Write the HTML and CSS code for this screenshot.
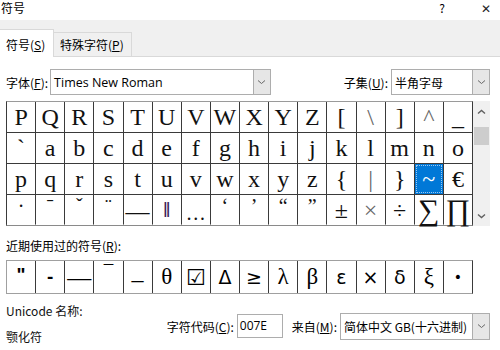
FILE: index.html
```html
<!DOCTYPE html>
<html lang="zh-CN">
<head>
    <meta charset="UTF-8">
    <title>符号</title>
    <link rel="stylesheet" href="styles.css">
</head>
<body>
    <div class="titlebar">
        <span class="title">符号</span>
        <span class="help">?</span>
        <span class="close">✕</span>
    </div>
    <div class="tabstrip">
        <div class="tab active">符号(<u>S</u>)</div>
        <div class="tab">特殊字符(<u>P</u>)</div>
    </div>
    <div class="panel">
        <div class="font-row">
            <span class="lbl">字体(<u>F</u>):</span>
            <div class="combo font-combo">
                <span class="combo-text">Times New Roman</span>
                <span class="combo-btn"><svg width="9" height="6" viewBox="0 0 9 6"><path d="M1 1.5 L4.5 4.5 L8 1.5" fill="none" stroke="#666" stroke-width="1"/></svg></span>
            </div>
            <span class="lbl subset-lbl">子集(<u>U</u>):</span>
            <div class="combo subset-combo">
                <span class="combo-text">半角字母</span>
                <span class="combo-btn"><svg width="9" height="6" viewBox="0 0 9 6"><path d="M1 1.5 L4.5 4.5 L8 1.5" fill="none" stroke="#666" stroke-width="1"/></svg></span>
            </div>
        </div>

        <div class="charmap">
            <div class="chars">
                <div class="cell">P</div><div class="cell">Q</div><div class="cell">R</div><div class="cell">S</div>
                <div class="cell">T</div><div class="cell">U</div><div class="cell">V</div><div class="cell">W</div>
                <div class="cell">X</div><div class="cell">Y</div><div class="cell">Z</div><div class="cell">[</div>
                <div class="cell thin">\</div><div class="cell">]</div><div class="cell thin">^</div><div class="cell">_</div>

                <div class="cell">`</div><div class="cell">a</div><div class="cell">b</div><div class="cell">c</div>
                <div class="cell">d</div><div class="cell">e</div><div class="cell">f</div><div class="cell">g</div>
                <div class="cell">h</div><div class="cell">i</div><div class="cell">j</div><div class="cell">k</div>
                <div class="cell">l</div><div class="cell">m</div><div class="cell">n</div><div class="cell">o</div>

                <div class="cell">p</div><div class="cell">q</div><div class="cell">r</div><div class="cell">s</div>
                <div class="cell">t</div><div class="cell">u</div><div class="cell">v</div><div class="cell">w</div>
                <div class="cell">x</div><div class="cell">y</div><div class="cell">z</div><div class="cell">{</div>
                <div class="cell thin">|</div><div class="cell">}</div><div class="cell selected">~</div><div class="cell">€</div>

                <div class="cell small">·</div><div class="cell small">ˉ</div><div class="cell small">ˇ</div><div class="cell small">¨</div>
                <div class="cell dash">—</div><div class="cell bars">‖</div><div class="cell ellipsis">…</div><div class="cell small">‘</div>
                <div class="cell small">’</div><div class="cell small">“</div><div class="cell small">”</div><div class="cell">±</div>
                <div class="cell thin">×</div><div class="cell">÷</div><div class="cell big">∑</div><div class="cell big">∏</div>
            </div>
            <div class="scrollbar">
                <svg class="arrow" width="9" height="6" viewBox="0 0 9 6"><path d="M1 4.5 L4.5 1.5 L8 4.5" fill="none" stroke="#606060" stroke-width="1.4"/></svg>
                <div class="thumb"></div>
                <svg class="arrow down" width="9" height="6" viewBox="0 0 9 6"><path d="M1 1.5 L4.5 4.5 L8 1.5" fill="none" stroke="#606060" stroke-width="1.4"/></svg>
            </div>
        </div>

        <div class="recent-lbl">近期使用过的符号(<u>R</u>):</div>
        <div class="recent">
            <div class="rcell quote">"</div>
            <div class="rcell hyphen">-</div>
            <div class="rcell emdash">—</div>
            <div class="rcell macron">¯</div>
            <div class="rcell endash">–</div>
            <div class="rcell serif">θ</div>
            <div class="rcell check">☑</div>
            <div class="rcell">Δ</div>
            <div class="rcell">≥</div>
            <div class="rcell serif">λ</div>
            <div class="rcell serif">β</div>
            <div class="rcell">ε</div>
            <div class="rcell">×</div>
            <div class="rcell">δ</div>
            <div class="rcell serif">ξ</div>
            <div class="rcell dot">•</div>
        </div>

        <div class="info">
            <div class="names">
                <div>Unicode 名称:</div>
                <div>颚化符</div>
            </div>
            <div class="code-row">
                <span class="lbl">字符代码(<u>C</u>):</span>
                <div class="code-input">007E</div>
                <span class="lbl from-lbl">来自(<u>M</u>):</span>
                <div class="combo from-combo">
                    <span class="combo-text">简体中文 GB(十六进制)</span>
                    <span class="combo-btn"><svg width="9" height="6" viewBox="0 0 9 6"><path d="M1 1.5 L4.5 4.5 L8 1.5" fill="none" stroke="#666" stroke-width="1"/></svg></span>
                </div>
            </div>
        </div>
    </div>
</body>
</html>
```

FILE: styles.css
```css
body {
    margin: 0;
    width: 500px;
    height: 350px;
    overflow: hidden;
    background-color: #fff;
    color: #000;
    font-family: "Noto Sans CJK SC", "Liberation Sans", sans-serif;
    font-size: 12px;
}
u {
    text-decoration: underline;
    text-underline-offset: 1px;
}
.titlebar {
    height: 20px;
    display: flex;
    align-items: flex-start;
}
.titlebar .title {
    font-size: 12px;
    line-height: 17px;
    margin-top: -1px;
    padding-left: 1px;
    flex: 1;
}
.titlebar .help {
    font-size: 12px;
    line-height: 14px;
    margin-top: 1px;
    margin-right: 36px;
}
.titlebar .close {
    font-size: 12px;
    line-height: 14px;
    margin-top: 1px;
    margin-right: 9px;
    color: #222;
}
.tabstrip {
    height: 36px;
    background-color: #f0f0f0;
    border-bottom: 1px solid #d9d9d9;
    display: flex;
    align-items: flex-end;
}
.tab {
    height: 23px;
    line-height: 23px;
    padding: 0 7px 0 6px;
    border: 1px solid #d9d9d9;
    border-bottom: none;
    border-left: none;
    background-color: #f0f0f0;
}
.tab.active {
    height: 27px;
    line-height: 29px;
    width: 40px;
    background-color: #fff;
    margin-bottom: -1px;
}
.panel {
    padding: 12px 10px 0 6px;
}
.font-row {
    display: flex;
    align-items: center;
    height: 26px;
}
.lbl {
    white-space: nowrap;
}
.combo {
    height: 24px;
    border: 1px solid #adadad;
    display: flex;
    align-items: center;
    background-color: #fff;
}
.combo-text {
    flex: 1;
    padding-left: 3px;
    white-space: nowrap;
    font-size: 12px;
}
.combo-btn {
    width: 16px;
    height: 24px;
    border-left: 1px solid #adadad;
    background-color: #e6e6e6;
    display: flex;
    align-items: center;
    justify-content: center;
}
.font-combo {
    width: 221px;
    margin-left: 2px;
}
.font-combo .combo-text {
    font-family: "Open Sans", "Liberation Sans", sans-serif;
    font-size: 12.5px;
}
.subset-lbl {
    margin-left: 73px;
}
.subset-combo {
    width: 98px;
    margin-left: 3px;
}
.charmap {
    margin-top: 6px;
    display: flex;
    height: 125px;
}
.chars {
    width: 465px;
    display: grid;
    grid-template-columns: repeat(16, 1fr);
    grid-template-rows: repeat(4, 30px);
    gap: 1px;
    background-color: #3a3a3a;
    border: 1px solid #3a3a3a;
    border-top-color: #9a9a9a;
    border-bottom: 2px solid #8a8a8a;
}
.cell {
    background-color: #fff;
    display: flex;
    align-items: center;
    justify-content: center;
    font-family: "Liberation Serif", serif;
    font-size: 24px;
    color: #111;
}
.cell.thin {
    color: #666;
    font-weight: 300;
}
.cell.small {
    font-size: 20px;
    align-items: flex-start;
}
.cell.dash {
    font-size: 24px;
    align-items: flex-end;
}
.cell.bars {
    color: #3b1d5a;
    font-size: 20px;
    font-weight: bold;
}
.cell.ellipsis {
    align-items: flex-end;
    font-size: 20px;
}
.cell.big {
    font-size: 30px;
}
.cell.selected {
    background-color: #0078d7;
    color: #fff;
    outline: 1px dotted #9cc7f0;
    outline-offset: -2px;
}
.scrollbar {
    width: 17px;
    background-color: #f0f0f0;
    display: flex;
    flex-direction: column;
    align-items: center;
}
.scrollbar .arrow {
    margin-top: 8px;
}
.scrollbar .arrow.down {
    margin-top: auto;
    margin-bottom: 7px;
}
.thumb {
    width: 15px;
    height: 18px;
    margin-top: 12px;
    background-color: #cdcdcd;
}
.recent-lbl {
    margin-top: 12px;
    line-height: 16px;
}
.recent {
    margin-top: 6px;
    width: 465px;
    height: 32px;
    display: grid;
    grid-template-columns: repeat(16, 1fr);
    gap: 1px;
    background-color: #3a3a3a;
    border: 1px solid #a0a0a0;
    border-right-color: #3a3a3a;
}
.rcell {
    background-color: #fff;
    display: flex;
    align-items: center;
    justify-content: center;
    font-family: "DejaVu Sans", sans-serif;
    font-size: 19px;
}
.rcell.serif {
    font-family: "Liberation Serif", serif;
    font-size: 23px;
}
.rcell.quote {
    font-family: "Liberation Sans", sans-serif;
    font-weight: bold;
    align-items: flex-start;
    padding-top: 3px;
}
.rcell.hyphen {
    font-family: "Liberation Sans", sans-serif;
    font-weight: bold;
}
.rcell.emdash {
    font-family: "Liberation Serif", serif;
    font-size: 24px;
}
.rcell.macron {
    font-family: "Liberation Serif", serif;
    align-items: flex-start;
}
.rcell.endash {
    font-family: "Liberation Serif", serif;
    font-size: 24px;
    padding-top: 4px;
}
.rcell.check {
    font-size: 22px;
    font-weight: bold;
}
.rcell.dot {
    font-size: 14px;
}
.info {
    margin-top: 9px;
    display: flex;
}
.names {
    width: 162px;
    display: flex;
    flex-direction: column;
    gap: 10px;
    line-height: 16px;
    color: #111;
}
.code-row {
    margin-top: 11px;
    display: flex;
    align-items: center;
    height: 24px;
}
.code-input {
    width: 42px;
    height: 22px;
    line-height: 22px;
    margin-left: 3px;
    padding-left: 2px;
    border: 1px solid #adadad;
    font-family: "Open Sans", "Liberation Sans", sans-serif;
}
.from-lbl {
    margin-left: 9px;
}
.from-combo {
    width: 148px;
    height: 25px;
    margin-left: 3px;
}
.from-combo .combo-btn {
    height: 25px;
}
```
